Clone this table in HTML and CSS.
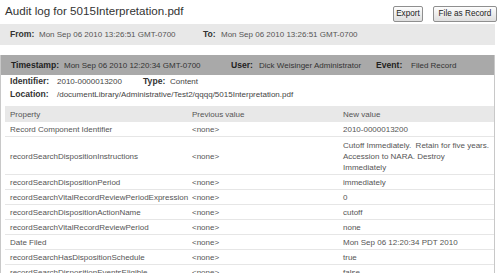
FILE: index.html
```html
<!DOCTYPE html>
<html>
<head>
<meta charset="utf-8">
<link rel="stylesheet" href="styles.css">
</head>
<body>
<div class="page">
  <div class="titlebar">
    <h1 class="title">Audit log for 5015Interpretation.pdf</h1>
    <div class="actions">
      <button class="btn btn-export">Export</button>
      <button class="btn btn-file">File as Record</button>
    </div>
  </div>
  <div class="range">
    <span class="field f-from"><span class="lbl l-from">From:</span>Mon Sep 06 2010 13:26:51 GMT-0700</span>
    <span class="field"><span class="lbl l-to">To:</span>Mon Sep 06 2010 13:26:51 GMT-0700</span>
  </div>
  <div class="entry">
    <div class="entry-head">
      <span class="field f-ts"><span class="lbl l-ts">Timestamp:</span>Mon Sep 06 2010 12:20:34 GMT-0700</span>
      <span class="field f-user"><span class="lbl l-user">User:</span>Dick Weisinger Administrator</span>
      <span class="field"><span class="lbl l-event">Event:</span>Filed Record</span>
    </div>
    <div class="entry-body">
      <div class="meta">
        <div class="meta-row">
          <span class="field f-id"><span class="lbl l-id">Identifier:</span>2010-0000013200</span>
          <span class="field"><span class="lbl l-type">Type:</span>Content</span>
        </div>
        <div class="meta-row">
          <span class="field"><span class="lbl l-id">Location:</span>/documentLibrary/Administrative/Test2/qqqq/5015Interpretation.pdf</span>
        </div>
      </div>
      <table class="changes">
        <thead>
          <tr><th class="c1">Property</th><th class="c2">Previous value</th><th class="c3">New value</th></tr>
        </thead>
        <tbody>
          <tr><td>Record Component Identifier</td><td>&lt;none&gt;</td><td>2010-0000013200</td></tr>
          <tr class="tall"><td>recordSearchDispositionInstructions</td><td>&lt;none&gt;</td><td>Cutoff Immediately.&nbsp; Retain for five years.<br>Accession to NARA. Destroy<br>Immediately</td></tr>
          <tr><td>recordSearchDispositionPeriod</td><td>&lt;none&gt;</td><td>immediately</td></tr>
          <tr><td>recordSearchVitalRecordReviewPeriodExpression</td><td>&lt;none&gt;</td><td>0</td></tr>
          <tr><td>recordSearchDispositionActionName</td><td>&lt;none&gt;</td><td>cutoff</td></tr>
          <tr><td>recordSearchVitalRecordReviewPeriod</td><td>&lt;none&gt;</td><td>none</td></tr>
          <tr><td>Date Filed</td><td>&lt;none&gt;</td><td>Mon Sep 06 12:20:34 PDT 2010</td></tr>
          <tr><td>recordSearchHasDispositionSchedule</td><td>&lt;none&gt;</td><td>true</td></tr>
          <tr><td>recordSearchDispositionEventsEligible</td><td>&lt;none&gt;</td><td>false</td></tr>
        </tbody>
      </table>
    </div>
  </div>
</div>
</body>
</html>
```
FILE: styles.css
```css
html, body {
  margin: 0;
  padding: 0;
  background: #fff;
}
body {
  font-family: "Liberation Sans", Arial, sans-serif;
  font-size: 8px;
  color: #555;
  overflow: hidden;
}
.page {
  width: 495px;
}
.titlebar {
  display: flex;
  justify-content: space-between;
  align-items: flex-start;
  height: 24px;
}
.title {
  margin: 3px 0 0 5px;
  font-size: 11.6px;
  font-weight: normal;
  color: #333;
  line-height: 16px;
}
.actions {
  display: flex;
  gap: 10px;
  margin: 6px -2px 0 0;
}
.btn {
  font-family: "Liberation Sans", Arial, sans-serif;
  font-size: 8.2px;
  color: #222;
  height: 16px;
  padding: 0;
  border: 1px solid #8f8f8f;
  border-radius: 2px;
  background: linear-gradient(#fdfdfd, #dedede);
  line-height: 14px;
  text-align: center;
}
.btn-export { width: 30px; }
.btn-file { width: 64px; }

.field {
  white-space: nowrap;
}
.lbl {
  display: inline-block;
  font-weight: bold;
  font-size: 8.6px;
  color: #333;
}
.range {
  display: flex;
  background: #e8e8e8;
  height: 21px;
  line-height: 21px;
  padding-left: 10px;
  color: #555;
}
.f-from { width: 193px; }
.l-from { width: 29px; }
.l-to { width: 18px; }

.entry {
  margin-top: 10px;
  border: 1px solid #c8c8c8;
  border-top: none;
}
.entry-head {
  display: flex;
  background: #a9a9a9;
  height: 20px;
  line-height: 20px;
  padding-left: 10px;
  color: #333;
}
.entry-head .lbl {
  color: #222;
}
.f-ts { width: 220px; }
.f-user { width: 145px; }
.l-ts { width: 53px; }
.l-user { width: 28px; }
.l-event { width: 35px; }

.entry-body {
  padding: 0 0 0 4px;
}
.meta {
  padding-left: 5px;
  line-height: 12px;
  color: #444;
}
.meta-row {
  display: flex;
}
.f-id { width: 133px; }
.l-id { width: 47px; }
.l-type { width: 27px; }

.changes {
  margin-top: 5px;
  width: 489px;
  table-layout: fixed;
  border-collapse: collapse;
  font-size: 8px;
  color: #555;
}
.changes th,
.changes td {
  box-sizing: border-box;
  text-align: left;
  white-space: nowrap;
}
.changes th {
  background: #e8e8e8;
  font-weight: normal;
  height: 16px;
  padding: 0 5px;
  color: #555;
}
.changes td {
  padding: 2px 0 1px 5px;
  border-bottom: 1px solid #e6e6e6;
  line-height: 11px;
  vertical-align: middle;
}
.changes tr.tall td {
  padding-top: 3px;
  padding-bottom: 1px;
}
.changes .c1 { width: 182px; }
.changes .c2 { width: 151px; }
.changes .c3 { width: 156px; }
```
